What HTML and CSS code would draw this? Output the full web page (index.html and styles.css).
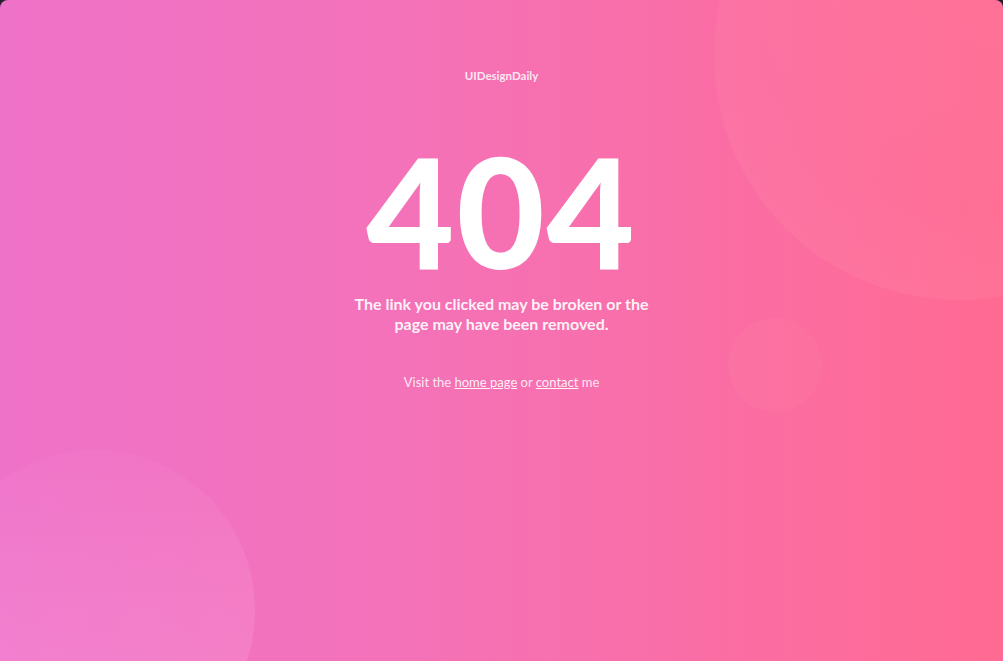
FILE: index.html
```html
<!DOCTYPE html>
<html lang="en">
<head>
<meta charset="utf-8">
<title>404</title>
<link rel="stylesheet" href="styles.css">
</head>
<body>
<div class="screen">
  <span class="bubble bubble-big"></span>
  <span class="bubble bubble-small"></span>
  <span class="bubble bubble-left"></span>
  <main class="content">
    <div class="brand">UIDesignDaily</div>
    <h1 class="code">404</h1>
    <p class="message">The link you clicked may be broken or the<br>page may have been removed.</p>
    <p class="links">Visit the <a href="#">home page</a> or <a href="#">contact</a> me</p>
  </main>
</div>
</body>
</html>
```

FILE: styles.css
```css
html, body {
  margin: 0;
  padding: 0;
  height: 100%;
  background: #22202c;
}
.screen {
  position: relative;
  height: 661px;
  overflow: hidden;
  border-radius: 8px 8px 0 0;
  background: linear-gradient(90deg, #ef72c9 0%, #f472b9 40%, #fb6da2 75%, #ff6a92 100%);
  font-family: "Lato", "Open Sans", sans-serif;
  color: #fff;
}
.bubble {
  position: absolute;
  border-radius: 50%;
}
.bubble-big {
  left: 714px;
  top: -190px;
  width: 490px;
  height: 490px;
  background: radial-gradient(circle at 60% 25%, rgba(255, 140, 165, 0.22) 0%, rgba(255, 140, 165, 0.15) 60%, rgba(255, 150, 175, 0.24) 100%);
}
.bubble-small {
  left: 728px;
  top: 318px;
  width: 94px;
  height: 94px;
  background: rgba(255, 150, 170, 0.09);
}
.bubble-left {
  left: -65px;
  top: 450px;
  width: 320px;
  height: 320px;
  background: linear-gradient(180deg, rgba(255, 190, 235, 0.04) 0%, rgba(255, 190, 235, 0.14) 45%, rgba(255, 190, 235, 0.24) 100%);
}
.content {
  position: relative;
  display: flex;
  flex-direction: column;
  align-items: center;
  text-align: center;
  padding-top: 68px;
}
.brand {
  font-size: 11.5px;
  font-weight: 700;
  line-height: 16px;
  color: rgba(255, 255, 255, 0.85);
}
.code {
  margin: 56px 0 0;
  font-size: 152px;
  font-weight: 900;
  line-height: 140px;
  letter-spacing: 2px;
}
.message {
  margin: 14px 0 0;
  font-size: 16px;
  font-weight: 700;
  line-height: 20px;
  color: rgba(255, 255, 255, 0.92);
}
.links {
  margin: 39px 0 0;
  font-size: 13px;
  line-height: 18px;
  color: rgba(255, 255, 255, 0.85);
}
.links a {
  color: rgba(255, 255, 255, 0.9);
  text-decoration: underline;
}
```
